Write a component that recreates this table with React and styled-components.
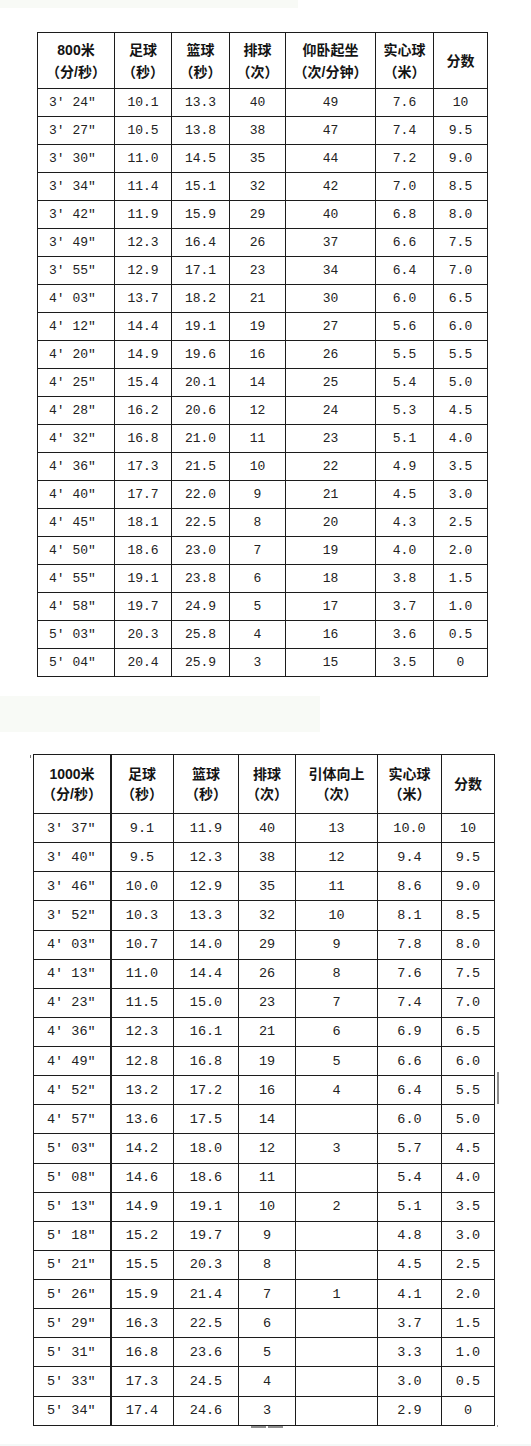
import React from "react";
import styled, { createGlobalStyle } from "styled-components";

const Global = createGlobalStyle`
  html, body { margin: 0; padding: 0; background: #ffffff; }
  body { font-family: "Liberation Sans", "Noto Sans CJK SC", sans-serif; color: #1a1a1a; }
`;

const Page = styled.div`
  width: 531px;
  height: 1446px;
  display: flex;
  flex-direction: column;
  overflow: hidden;
  position: relative;
`;

const Band = styled.div`
  flex: none;
  width: ${(p) => p.$w}px;
  height: ${(p) => p.$h}px;
  margin-top: ${(p) => p.$mt || 0}px;
  background: ${(p) => p.$bg || "#f8faf6"};
`;

const TableWrap = styled.div`
  flex: none;
  position: relative;
  margin-top: ${(p) => p.$mt}px;
  margin-left: ${(p) => p.$ml}px;
  align-self: flex-start;
`;

const Grid = styled.div`
  display: grid;
  grid-template-columns: ${(p) => p.$cols.map((c) => c + "px").join(" ")};
  grid-template-rows: ${(p) => p.$head}px repeat(${(p) => p.$rows}, ${(p) => p.$rowH}px);
  gap: 1px;
  padding: 1px;
  background: #1c1c1c;
`;

const HeadCell = styled.div`
  background: #fff;
  display: flex;
  flex-direction: column;
  align-items: center;
  justify-content: center;
  font-family: "Liberation Sans", "Noto Sans CJK SC", sans-serif;
  font-weight: 700;
  font-size: 14px;
  line-height: ${(p) => p.$lh}px;
  color: #141414;
  text-align: center;
  white-space: nowrap;
`;

const Cell = styled.div`
  background: #fff;
  display: flex;
  align-items: center;
  justify-content: ${(p) => (p.$left ? "flex-start" : "center")};
  padding-left: ${(p) => (p.$left ? p.$pl : 0)}px;
  font-family: "Liberation Mono", "Noto Sans CJK SC", monospace;
  font-size: ${(p) => p.$fs}px;
  color: #222;
  white-space: pre;
`;

const ThickLine = styled.div`
  position: absolute;
  left: ${(p) => p.$x}px;
  top: 0;
  bottom: 0;
  width: 1px;
  background: #1c1c1c;
`;

const Mark = styled.div`
  position: absolute;
  left: ${(p) => p.$x}px;
  top: ${(p) => p.$y}px;
  width: ${(p) => p.$w}px;
  height: ${(p) => p.$h}px;
  background: ${(p) => p.$c || "#8a8a8a"};
`;

const t1Head = [
  ["800米", "（分/秒）"],
  ["足球", "（秒）"],
  ["篮球", "（秒）"],
  ["排球", "（次）"],
  ["仰卧起坐", "（次/分钟）"],
  ["实心球", "（米）"],
  ["分数"],
];

const t1 = `3′24″ 10.1 13.3 40 49 7.6 10
3′27″ 10.5 13.8 38 47 7.4 9.5
3′30″ 11.0 14.5 35 44 7.2 9.0
3′34″ 11.4 15.1 32 42 7.0 8.5
3′42″ 11.9 15.9 29 40 6.8 8.0
3′49″ 12.3 16.4 26 37 6.6 7.5
3′55″ 12.9 17.1 23 34 6.4 7.0
4′03″ 13.7 18.2 21 30 6.0 6.5
4′12″ 14.4 19.1 19 27 5.6 6.0
4′20″ 14.9 19.6 16 26 5.5 5.5
4′25″ 15.4 20.1 14 25 5.4 5.0
4′28″ 16.2 20.6 12 24 5.3 4.5
4′32″ 16.8 21.0 11 23 5.1 4.0
4′36″ 17.3 21.5 10 22 4.9 3.5
4′40″ 17.7 22.0 9 21 4.5 3.0
4′45″ 18.1 22.5 8 20 4.3 2.5
4′50″ 18.6 23.0 7 19 4.0 2.0
4′55″ 19.1 23.8 6 18 3.8 1.5
4′58″ 19.7 24.9 5 17 3.7 1.0
5′03″ 20.3 25.8 4 16 3.6 0.5
5′04″ 20.4 25.9 3 15 3.5 0`;

const t2Head = [
  ["1000米", "（分/秒）"],
  ["足球", "（秒）"],
  ["篮球", "（秒）"],
  ["排球", "（次）"],
  ["引体向上", "（次）"],
  ["实心球", "（米）"],
  ["分数"],
];

const t2 = `3′37″ 9.1 11.9 40 13 10.0 10
3′40″ 9.5 12.3 38 12 9.4 9.5
3′46″ 10.0 12.9 35 11 8.6 9.0
3′52″ 10.3 13.3 32 10 8.1 8.5
4′03″ 10.7 14.0 29 9 7.8 8.0
4′13″ 11.0 14.4 26 8 7.6 7.5
4′23″ 11.5 15.0 23 7 7.4 7.0
4′36″ 12.3 16.1 21 6 6.9 6.5
4′49″ 12.8 16.8 19 5 6.6 6.0
4′52″ 13.2 17.2 16 4 6.4 5.5
4′57″ 13.6 17.5 14 - 6.0 5.0
5′03″ 14.2 18.0 12 3 5.7 4.5
5′08″ 14.6 18.6 11 - 5.4 4.0
5′13″ 14.9 19.1 10 2 5.1 3.5
5′18″ 15.2 19.7 9 - 4.8 3.0
5′21″ 15.5 20.3 8 - 4.5 2.5
5′26″ 15.9 21.4 7 1 4.1 2.0
5′29″ 16.3 22.5 6 - 3.7 1.5
5′31″ 16.8 23.6 5 - 3.3 1.0
5′33″ 17.3 24.5 4 - 3.0 0.5
5′34″ 17.4 24.6 3 - 2.9 0`;

const parse = (s) =>
  s.split("\n").map((l) =>
    l.split(" ").map((v, i) => {
      if (v === "-") return "";
      if (i === 0) return v.replace("′", "′ ");
      return v;
    })
  );

function ScoreTable({ head, data, cols, headH, rowH, lh, fs, pl }) {
  return (
    <Grid $cols={cols} $head={headH} $rows={data.length} $rowH={rowH}>
      {head.map((h, i) => (
        <HeadCell key={"h" + i} $lh={lh}>
          {h.map((line, j) => (
            <span key={j}>{line}</span>
          ))}
        </HeadCell>
      ))}
      {data.map((row, r) =>
        row.map((v, c) => (
          <Cell key={r + "-" + c} $left={c === 0} $pl={pl} $fs={fs}>
            {v}
          </Cell>
        ))
      )}
    </Grid>
  );
}

export default function App() {
  return (
    <>
      <Global />
      <Page>
        <Band $w={298} $h={8} />
        <TableWrap $mt={24} $ml={37}>
          <ScoreTable
            head={t1Head}
            data={parse(t1)}
            cols={[76, 56, 57, 55, 89, 57, 53]}
            headH={55}
            rowH={27}
            lh={22}
            fs={13}
            pl={11}
          />
        </TableWrap>
        <Band $w={320} $h={36} $mt={19} />
        <TableWrap $mt={22} $ml={33}>
          <ScoreTable
            head={t2Head}
            data={parse(t2)}
            cols={[76, 62, 64, 56, 81, 63, 52]}
            headH={58}
            rowH={28.14}
            lh={20}
            fs={13.5}
            pl={13}
          />
          <ThickLine $x={78} />
          <Mark $x={-3} $y={1} $w={1} $h={3} $c="#777" />
          <Mark $x={464} $y={318} $w={2} $h={32} $c="#8c8c8c" />
          <Mark $x={218} $y={672} $w={15} $h={2} $c="#8c8c8c" />
          <Mark $x={235} $y={672} $w={15} $h={2} $c="#8c8c8c" />
          <Mark $x={464} $y={671} $w={1} $h={2} $c="#999" />
        </TableWrap>
        <Band $w={531} $h={4} $mt={18} $bg="#f4f8f7" />
      </Page>
    </>
  );
}
